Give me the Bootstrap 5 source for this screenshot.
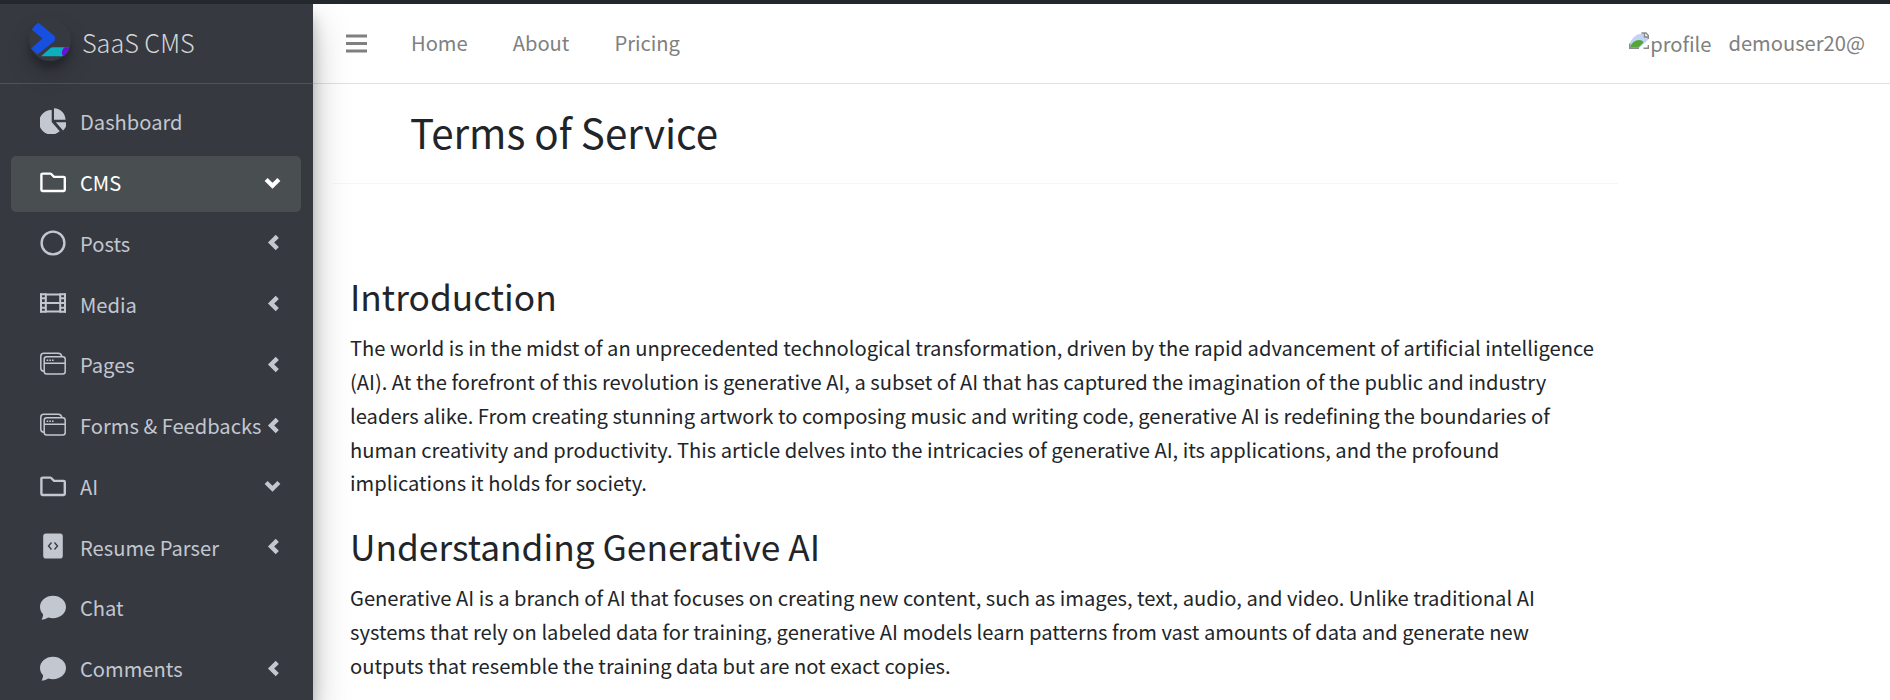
<!DOCTYPE html>
<html lang="en">
<head>
<meta charset="utf-8">
<meta name="viewport" content="width=device-width, initial-scale=1">
<title>Terms of Service</title>
<link rel="stylesheet" href="https://cdn.jsdelivr.net/npm/bootstrap@5.3.0/dist/css/bootstrap.min.css">
<style>
  body { font-family: "Noto Sans CJK SC", sans-serif; font-size: 20.15px; line-height: 33.75px; color: #212529; height: 700px; border-top: 4px solid #23282d; }
  .side { width: 313px; background: #363940; z-index: 5; box-shadow: 0 17.5px 35px rgba(0,0,0,.25), 0 12.5px 12.5px rgba(0,0,0,.22); clip-path: inset(0 -80px 0 0); }
  .brand { height: 80px; border-bottom: 1px solid #4e5359; color: rgba(255,255,255,.8); font-size: 25.2px; font-weight: 300; padding: 0 0 2px 29px; gap: 11px; }
  .brand svg { width: 42px; height: 42px; border-radius: 50%; margin-bottom: 6px; box-shadow: 0 12.5px 25px rgba(0,0,0,.19), 0 7.5px 7.5px rgba(0,0,0,.23); }
  .menu { padding: 11.25px 12px 0 11px; gap: 4.75px; }
  .menu .nav-link { height: 56px; padding: 0 20px 0 29px; color: #c2c7d0; border-radius: 5px; line-height: 30px; white-space: nowrap; }
  .menu .nav-link.active { background: #494e50; color: #fff; }
  .menu .ico { width: 26px; height: 26px; margin: 0 14px 4.500px 0; flex: none; }
  .menu .chev { width: 17px; height: 17px; margin: 0 0 4px auto; flex: none; }
  .menu span { margin-bottom: 1.800px; }
  .topbar { height: 80px; border-bottom: 1px solid #dee2e6; padding: 0 25px 0 33px; color: #808080; }
  .topbar a { color: #808080; text-decoration: none; }
  .burger { width: 21px; height: 19px; margin-right: 44px; }
  .links { gap: 45px; padding-bottom: 2px; }
  .user { padding-bottom: 2px; }
  .user svg { margin-bottom: 4px; }
  .profile { padding: 2px 0 0 1px; }
  .mail { margin-left: 17px; }
  .title-row { margin: 0 0 0 20px; width: 1285px; height: 100px; padding: 21px 0 0 77px; border-bottom: 1px solid #f6f6f6; }
  h1 { font-size: 40.3px; font-weight: 400; line-height: 54px; margin: 0; }
  h2 { font-size: 35.3px; font-weight: 400; line-height: 48px; margin: 0 0 11px; }
  .article { padding: 88.3px 0 0 37px; width: 1310px; }
  .article p { margin: 0 0 22.25px; white-space: nowrap; }
</style>
</head>
<body class="d-flex overflow-hidden">
<svg class="d-none">
  <symbol id="left" viewBox="0 0 16 16"><path d="M12.500 2.300 6.700 8l5.800 5.700" fill="none" stroke="currentColor" stroke-width="4.200"/></symbol>
  <symbol id="down" viewBox="0 0 16 16"><path d="M2 5.200 8 11l6-5.800" fill="none" stroke="currentColor" stroke-width="4"/></symbol>
  <symbol id="folder" viewBox="0 0 26 26"><path d="M3 4.600h7.200q.6 0 1 .4l2.800 2.900h9.600q1.200 0 1.200 1.200v11.700q0 1.200-1.200 1.200H2.600q-1.200 0-1.200-1.200V5.800q0-1.200 1.600-1.200Z" fill="none" stroke="currentColor" stroke-width="2.400"/></symbol>
  <symbol id="windows" viewBox="0 0 26 26"><g fill="none" stroke="currentColor" stroke-width="1.500"><rect x="4.200" y="5.800" width="21" height="17.200" rx="2.500"/><path d="M4.200 12.300h21M4 20.200q-3.200-.2-3.200-3V5.200q0-3 3-3h14.500q3 0 3.600 3.300"/></g><path d="M6.600 9.300h1.600M9.300 9.300h1.600M12 9.300h1.600" stroke="currentColor" stroke-width="1.500"/></symbol>
  <symbol id="bubble" viewBox="0 0 26 26"><path d="M13 1.800c7.200 0 13 4.900 13 11.200s-5.800 11.200-13 11.200c-1.700 0-3.300-.2-4.700-.7-1.800 1.300-4 2.100-6.800 2.100.8-1.300 1.600-3.400 1.600-5.300C1.200 18.200 0 15.800 0 13 0 6.700 5.800 1.800 13 1.800Z" fill="currentColor"/></symbol>
</svg>

<aside class="side position-relative flex-shrink-0">
  <div class="brand d-flex align-items-center">
    <svg viewBox="0 0 42 42"><path d="m2 10 6.500-7L25 16.500q2.500 3 0 6L8.500 35.500 2 29.500l11.500-10Z" fill="#174fe0"/><path d="M12 37.300 21.500 29q1-.8 2.300-.8H40v9.100Z" fill="#0caec0"/><path d="M42 28.200h-6.500q-4.500 4.300-1.500 9.100h8Z" fill="#6a0fd6"/></svg>
    <span>SaaS CMS</span>
  </div>
  <nav class="menu nav flex-column flex-nowrap">
    <a class="nav-link d-flex align-items-center"><svg class="ico" viewBox="0 0 26 26"><path d="M11.700 2v12l8 9.300A12.300 12.300 0 1 1 11.700 2ZM14 .3c6.500 0 11.300 5.200 11.600 11.500H14ZM15.800 14.200H27c-.2 3.600-1.600 6.300-3.900 8.300Z" fill="currentColor"/></svg><span>Dashboard</span></a>
    <a class="nav-link active d-flex align-items-center"><svg class="ico"><use href="#folder"/></svg><span>CMS</span><svg class="chev"><use href="#down"/></svg></a>
    <a class="nav-link d-flex align-items-center"><svg class="ico" viewBox="0 0 26 26"><circle cx="13" cy="13" r="11.400" fill="none" stroke="currentColor" stroke-width="2.400"/></svg><span>Posts</span><svg class="chev"><use href="#left"/></svg></a>
    <a class="nav-link d-flex align-items-center"><svg class="ico" viewBox="0 0 26 26"><g fill="none" stroke="currentColor" stroke-width="2"><path d="M1 3.500v19M25 3.500v19M5.800 3.500v19M20.200 3.500v19M5.800 13h14.400" /><path d="M5 4.600h16M5 21.400h16M0 8.300h6M0 13h6M0 17.700h6M20 8.300h6M20 13h6M20 17.700h6M0 4.300h6M20 4.300h6M0 21.700h6M20 21.700h6"/></g></svg><span>Media</span><svg class="chev"><use href="#left"/></svg></a>
    <a class="nav-link d-flex align-items-center"><svg class="ico"><use href="#windows"/></svg><span>Pages</span><svg class="chev"><use href="#left"/></svg></a>
    <a class="nav-link d-flex align-items-center"><svg class="ico"><use href="#windows"/></svg><span>Forms &amp; Feedbacks</span><svg class="chev"><use href="#left"/></svg></a>
    <a class="nav-link d-flex align-items-center"><svg class="ico"><use href="#folder"/></svg><span>AI</span><svg class="chev"><use href="#down"/></svg></a>
    <a class="nav-link d-flex align-items-center"><svg class="ico" viewBox="0 0 26 26"><rect x="3.200" y=".5" width="19.600" height="25" rx="2.800" fill="currentColor"/><path d="m11.500 9.500-3 3.500 3 3.500M14.500 9.500l3 3.500-3 3.500" fill="none" stroke="#363940" stroke-width="1.300"/></svg><span>Resume Parser</span><svg class="chev"><use href="#left"/></svg></a>
    <a class="nav-link d-flex align-items-center"><svg class="ico"><use href="#bubble"/></svg><span>Chat</span></a>
    <a class="nav-link d-flex align-items-center"><svg class="ico"><use href="#bubble"/></svg><span>Comments</span><svg class="chev"><use href="#left"/></svg></a>
  </nav>
</aside>

<main class="flex-grow-1 bg-white">
  <header class="topbar d-flex align-items-center">
    <svg class="burger" viewBox="0 0 21 19"><path d="M0 2h21M0 9.500h21M0 17h21" stroke="#808080" stroke-width="3"/></svg>
    <nav class="links d-flex"><a href="#">Home</a><a href="#">About</a><a href="#">Pricing</a></nav>
    <div class="user d-flex align-items-center ms-auto">
      <svg width="20" height="17" viewBox="0 0 20 17"><path d="M0 14Q2 3 14 1l5 5v2L10 17H0Z" fill="#c3d3f5"/><path d="M1 15q3-7 9-7 4 0 4.500 2.500L9.500 15.500H1Z" fill="#57a639"/><path d="M12.500 1h4.500l2.300 2.500V7M15.500 1v4h4M.7 11.500v4.700H10M14.500 16.200h4.800V13" fill="none" stroke="#8b8b8b" stroke-width="1.400"/><path d="m10.500 17 9.500-8.500" stroke="#fff" stroke-width="1.800"/></svg>
      <span class="profile">profile</span><span class="mail">demouser20@</span>
    </div>
  </header>
  <div class="title-row"><h1>Terms of Service</h1></div>
  <div class="article">
    <h2>Introduction</h2>
    <p>The world is in the midst of an unprecedented technological transformation, driven by the rapid advancement of artificial intelligence<br>(AI). At the forefront of this revolution is generative AI, a subset of AI that has captured the imagination of the public and industry<br>leaders alike. From creating stunning artwork to composing music and writing code, generative AI is redefining the boundaries of<br>human creativity and productivity. This article delves into the intricacies of generative AI, its applications, and the profound<br>implications it holds for society.</p>
    <h2>Understanding Generative AI</h2>
    <p>Generative AI is a branch of AI that focuses on creating new content, such as images, text, audio, and video. Unlike traditional AI<br>systems that rely on labeled data for training, generative AI models learn patterns from vast amounts of data and generate new<br>outputs that resemble the training data but are not exact copies.</p>
  </div>
</main>
<script src="https://cdn.jsdelivr.net/npm/bootstrap@5.3.0/dist/js/bootstrap.bundle.min.js"></script>
</body>
</html>
